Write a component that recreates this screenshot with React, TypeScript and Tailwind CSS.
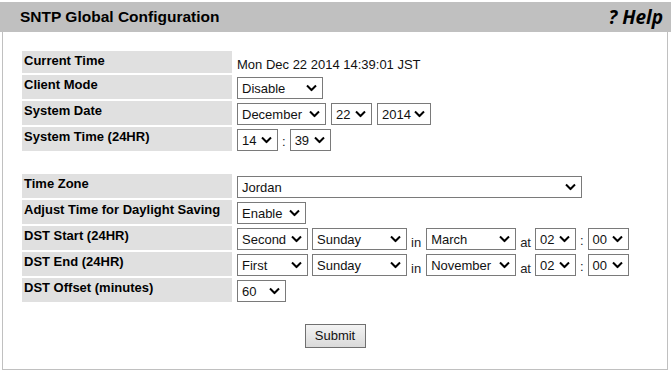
import React from "react";

const Chevron = () => (
  <svg
    width="11"
    height="7"
    viewBox="0 0 11 7"
    className="pointer-events-none absolute right-[5px] top-1/2 -translate-y-1/2"
  >
    <polyline points="1,1 5.5,5.5 10,1" fill="none" stroke="#000" strokeWidth="2" />
  </svg>
);

// drop-down box, drawn like the old IE select
function Sel({ value, className }: { value: string; className: string }) {
  return (
    <div
      className={
        "relative flex h-[22px] shrink-0 items-center border border-[#7a7a7a] bg-white pl-[4px] " + className
      }
    >
      <span className="text-[13px] leading-[15px] text-[#111]">{value}</span>
      <Chevron />
    </div>
  );
}

const Label = ({ children }: { children: React.ReactNode }) => (
  <div className="bg-[#e0e0e0] pl-[2px] pt-[2px] text-[13px] font-bold leading-[16px] text-black">
    {children}
  </div>
);

const Txt = ({ t, className }: { t: string; className: string }) => (
  <span className={"text-[13px] leading-[16px] text-[#222] " + className}>{t}</span>
);

function DstRow({ week, month }: { week: string; month: string }) {
  return (
    <div className="flex items-end pl-[3px]">
      <Sel value={week} className="w-[71px]" />
      <Sel value="Sunday" className="ml-[4px] w-[95px]" />
      <Txt t="in" className="ml-[4px] mb-[-1px]" />
      <Sel value={month} className="ml-[5px] w-[90px]" />
      <Txt t="at" className="ml-[4px] mb-[-1px]" />
      <Sel value="02" className="ml-[4px] w-[41px]" />
      <Txt t=":" className="ml-[4px] mb-[1px] text-[#5a7aa0]" />
      <Sel value="00" className="ml-[4px] w-[41px]" />
    </div>
  );
}

export default function App() {
  return (
    <div className="h-[373px] w-[671px] bg-white font-['Liberation_Sans',Arial,sans-serif]">
      {/* Header */}
      <div className="mt-[2px] flex h-[30px] items-center justify-between bg-[#c0c0c0] pl-[20px] pr-[8px]">
        <span className="text-[15.5px] font-bold text-black">SNTP Global Configuration</span>
        <span className="font-['Open_Sans',sans-serif] text-[19px] font-bold italic text-black">? Help</span>
      </div>

      {/* Body */}
      <div className="ml-[2px] w-[666px] border-b border-l border-r border-[#c0c0c0] px-[19px] pb-[21px] pt-[19px]">
        <div className="grid w-[612px] grid-cols-[210px_1fr] grid-rows-[22px_24px_24px_24px_19px_24px_24px_24px_24px_24px] gap-[2px]">
          <Label>Current Time</Label>
          <div className="pl-[3px] pt-[6px] text-[13px] leading-[16px] text-[#111]">
            Mon Dec 22 2014 14:39:01 JST
          </div>

          <Label>Client Mode</Label>
          <div className="flex items-end pl-[3px]">
            <Sel value="Disable" className="w-[86px]" />
          </div>

          <Label>System Date</Label>
          <div className="flex items-end pl-[3px]">
            <Sel value="December" className="w-[89px]" />
            <Sel value="22" className="ml-[5px] w-[41px]" />
            <Sel value="2014" className="ml-[5px] w-[54px]" />
          </div>

          <Label>System Time (24HR)</Label>
          <div className="flex items-end pl-[3px]">
            <Sel value="14" className="w-[41px]" />
            <Txt t=":" className="ml-[4px] mb-[1px] text-[#5a7aa0]" />
            <Sel value="39" className="ml-[4px] w-[41px]" />
          </div>

          <div />
          <div />

          <Label>Time Zone</Label>
          <div className="flex items-end pl-[3px]">
            <Sel value="Jordan" className="w-[345px]" />
          </div>

          <Label>Adjust Time for Daylight Saving</Label>
          <div className="flex items-end pl-[3px]">
            <Sel value="Enable" className="w-[69px]" />
          </div>

          <Label>DST Start (24HR)</Label>
          <DstRow week="Second" month="March" />

          <Label>DST End (24HR)</Label>
          <DstRow week="First" month="November" />

          <Label>DST Offset (minutes)</Label>
          <div className="flex items-end pl-[3px]">
            <Sel value="60" className="w-[49px]" />
          </div>
        </div>

        <div className="mt-[22px] flex justify-center">
          <button className="h-[24px] w-[61px] border border-[#707070] bg-gradient-to-b from-[#f3f3f3] to-[#dadada] text-[13px] text-[#111]">
            Submit
          </button>
        </div>
      </div>
    </div>
  );
}
